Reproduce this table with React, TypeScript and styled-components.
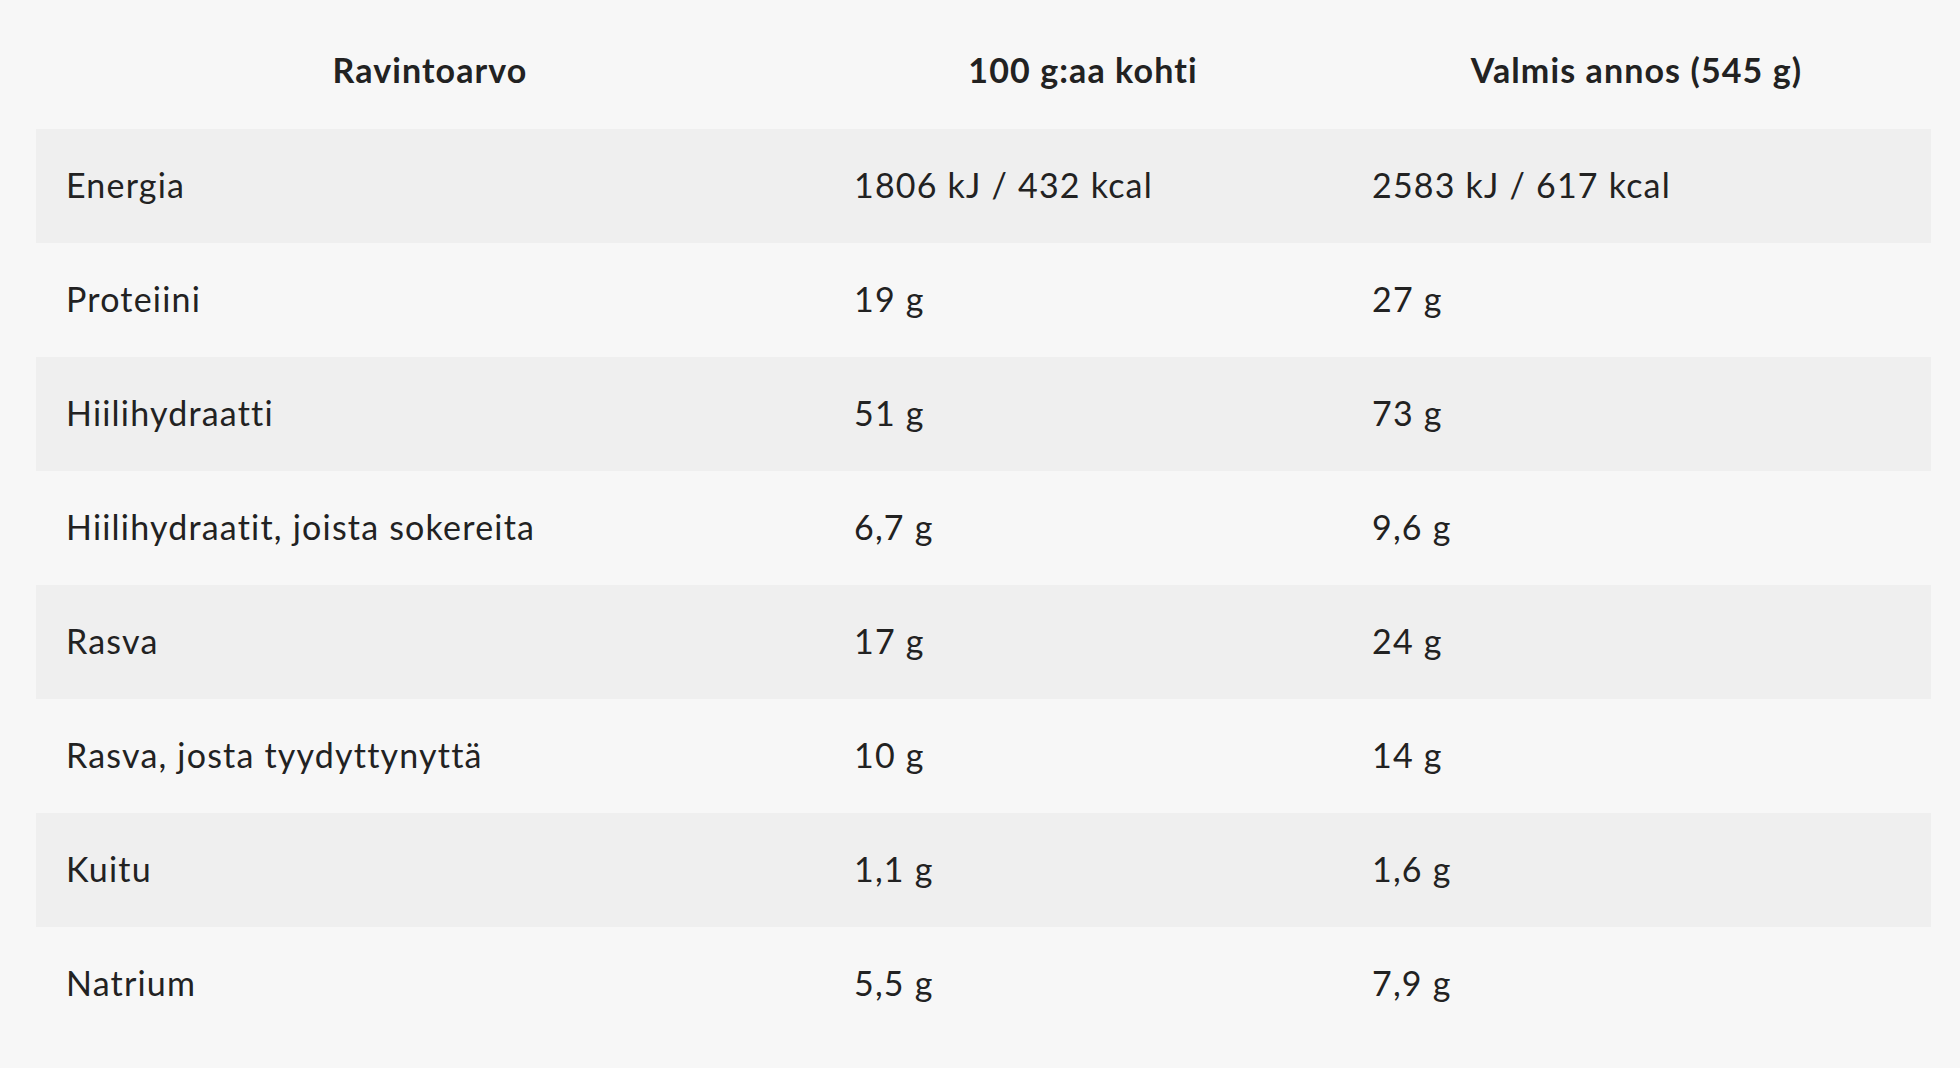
import React from "react";
import styled, { createGlobalStyle } from "styled-components";

const Global = createGlobalStyle`
  html, body { margin: 0; padding: 0; background: #f7f7f7; }
  body {
    font-family: "Lato", "Inter", "Liberation Sans", sans-serif;
    color: #222;
    font-variant-ligatures: none;
  }
`;

const Wrap = styled.div`
  padding: 0 29px 0 36px;
`;

const Table = styled.table`
  width: 100%;
  border-collapse: collapse;
  table-layout: fixed;
`;

const HeadCell = styled.th<{ $w: number }>`
  width: ${(p) => p.$w}px;
  height: 129px;
  padding: 10px 0 0;
  box-sizing: border-box;
  text-align: center;
  font-size: 34px;
  letter-spacing: 1.1px;
  font-weight: 700;
  vertical-align: middle;
`;

const Row = styled.tr<{ $shade: boolean }>`
  height: 114px;
  background: ${(p) => (p.$shade ? "#efefef" : "transparent")};
`;

const Cell = styled.td`
  padding: 0 0 4px 30px;
  font-size: 34px;
  letter-spacing: 1.2px;
  font-weight: 400;
  vertical-align: middle;
`;

const rows: [string, string, string][] = [
  ["Energia", "1806 kJ / 432 kcal", "2583 kJ / 617 kcal"],
  ["Proteiini", "19 g", "27 g"],
  ["Hiilihydraatti", "51 g", "73 g"],
  ["Hiilihydraatit, joista sokereita", "6,7 g", "9,6 g"],
  ["Rasva", "17 g", "24 g"],
  ["Rasva, josta tyydyttynyttä", "10 g", "14 g"],
  ["Kuitu", "1,1 g", "1,6 g"],
  ["Natrium", "5,5 g", "7,9 g"],
];

export default function App() {
  return (
    <>
      <Global />
      <Wrap>
        <Table>
          <thead>
            <tr>
              <HeadCell $w={788}>Ravintoarvo</HeadCell>
              <HeadCell $w={518}>100 g:aa kohti</HeadCell>
              <HeadCell $w={589}>Valmis annos (545 g)</HeadCell>
            </tr>
          </thead>
          <tbody>
            {rows.map((r, i) => (
              <Row key={r[0]} $shade={i % 2 === 0}>
                <Cell>{r[0]}</Cell>
                <Cell>{r[1]}</Cell>
                <Cell>{r[2]}</Cell>
              </Row>
            ))}
          </tbody>
        </Table>
      </Wrap>
    </>
  );
}
